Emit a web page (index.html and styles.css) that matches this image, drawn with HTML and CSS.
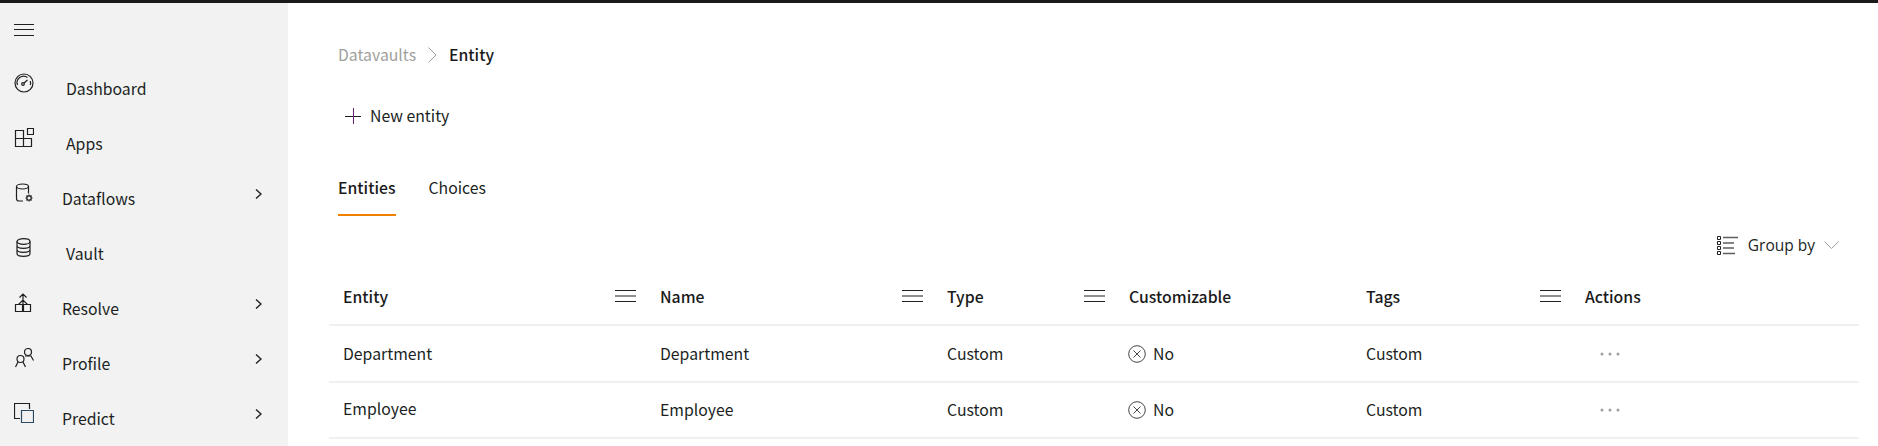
FILE: index.html
```html
<!DOCTYPE html>
<html lang="en">
<head>
  <meta charset="UTF-8" />
  <title>Entity</title>
  <link rel="stylesheet" href="styles.css">
</head>
<body>
  <div class="topbar"></div>
  <div class="app">
    <nav class="sidebar">
      <button class="hamburger" aria-label="Menu">
        <svg width="20" height="12" viewBox="0 0 20 12"><path d="M0 .5h20M0 5.5h20M0 11.5h20" /></svg>
      </button>
      <ul class="nav">
        <li class="nav-item">
          <svg class="nav-icon" width="20" height="20" viewBox="0 0 20 20"><circle cx="10" cy="10" r="9" /><path d="M3.500 12a6.500 6.500 0 0 1 10-7.500M16.200 8a6.500 6.500 0 0 1 .2 4" /><circle cx="9" cy="11" r="1.300" /><path d="M10 10l3.500-3" /></svg>
          <span class="nav-label">Dashboard</span>
        </li>
        <li class="nav-item">
          <svg class="nav-icon" width="20" height="20" viewBox="0 0 20 20"><path d="M1.500 2.500h8v8h8v8h-16zM1.500 10.500h8v8" /><path d="M13.500.5h6v6h-6z" /></svg>
          <span class="nav-label">Apps</span>
        </li>
        <li class="nav-item has-sub">
          <svg class="nav-icon" width="20" height="20" viewBox="0 0 20 20"><ellipse cx="8.500" cy="3.500" rx="6" ry="2.500" /><path d="M2.500 3.500v12a2.500 2.500 0 0 0 2.500 2.500h4M14.500 3.500v7" /><circle cx="15" cy="15" r="2.200" /><path d="M15 11.500v1.300M15 17.200v1.300M11.500 15h1.300M17.200 15h1.300M12.500 12.500l1 1M16.500 16.500l1 1M17.500 12.500l-1 1M13.500 16.500l-1 1" /></svg>
          <span class="nav-label">Dataflows</span>
          <svg class="chevron" width="7" height="10" viewBox="0 0 7 10"><path d="M1 .5L6 5 1 9.500" /></svg>
        </li>
        <li class="nav-item">
          <svg class="nav-icon" width="20" height="20" viewBox="0 0 20 20"><ellipse cx="9.500" cy="3.500" rx="6.500" ry="2.800" /><path d="M3 3.500v12c0 1.600 2.900 2.800 6.500 2.800s6.500-1.200 6.500-2.800v-12M3 7.500c0 1.600 2.900 2.800 6.500 2.800s6.500-1.200 6.500-2.800M3 11.500c0 1.600 2.900 2.800 6.500 2.800s6.500-1.200 6.500-2.800" /></svg>
          <span class="nav-label">Vault</span>
        </li>
        <li class="nav-item has-sub">
          <svg class="nav-icon" width="20" height="20" viewBox="0 0 20 20"><path d="M1.500 11.500h7v7h-7zM9.500 11.500h7v7h-7zM9 11V1M5.500 4.500L9 1l3.500 3.500M4.500 11.500L9 7l4.500 4.500" /></svg>
          <span class="nav-label">Resolve</span>
          <svg class="chevron" width="7" height="10" viewBox="0 0 7 10"><path d="M1 .5L6 5 1 9.500" /></svg>
        </li>
        <li class="nav-item has-sub">
          <svg class="nav-icon" width="20" height="20" viewBox="0 0 20 20"><circle cx="6.500" cy="11" r="3.500" /><path d="M1.500 19l2.500-5M11.500 19L9 14" /><circle cx="14" cy="4" r="3.500" /><path d="M11 8h6l2.500 4.500" /></svg>
          <span class="nav-label">Profile</span>
          <svg class="chevron" width="7" height="10" viewBox="0 0 7 10"><path d="M1 .5L6 5 1 9.500" /></svg>
        </li>
        <li class="nav-item has-sub">
          <svg class="nav-icon" width="20" height="20" viewBox="0 0 20 20"><path d="M6 15.500H.5V.5h15V6" /><path class="blue" d="M7.500 7.500h12v12h-12z" /></svg>
          <span class="nav-label">Predict</span>
          <svg class="chevron" width="7" height="10" viewBox="0 0 7 10"><path d="M1 .5L6 5 1 9.500" /></svg>
        </li>
      </ul>
    </nav>

    <main class="content">
      <div class="breadcrumb">
        <span class="crumb-link">Datavaults</span>
        <svg class="crumb-sep" width="9" height="16" viewBox="0 0 9 16"><path d="M.5.5L8 8 .5 15.500" /></svg>
        <span class="crumb-current">Entity</span>
      </div>

      <button class="new-btn">
        <svg width="16" height="16" viewBox="0 0 16 16"><path d="M0 8.500h16" class="dark" /><path d="M8.500 0v16" class="purple" /></svg>
        New entity
      </button>

      <div class="tabs">
        <span class="tab active">Entities</span>
        <span class="tab">Choices</span>
      </div>

      <div class="toolbar">
        <span class="group-by">
          <svg width="21" height="19" viewBox="0 0 21 19"><path class="dots" d="M.5.5h3v3h-3zM.5 5.500h3v3h-3zM.5 10.500h3v3h-3zM.5 15.500h3v3h-3z" /><path class="lines" d="M6 1.500h15M6 7h11M6 12h11M6 17.500h12" /></svg>
          Group by
          <svg class="caret" width="15" height="9" viewBox="0 0 15 9"><path d="M.5.5l7 7 7-7" /></svg>
        </span>
      </div>

      <table class="grid">
        <colgroup>
          <col class="col-entity"><col class="col-name"><col class="col-type"><col class="col-custom"><col class="col-tags"><col>
        </colgroup>
        <thead>
          <tr>
            <th><div class="th-inner">Entity <svg width="21" height="12" viewBox="0 0 21 12"><path d="M0 .5h21M0 6h21M0 11.500h21" /></svg></div></th>
            <th><div class="th-inner">Name <svg width="21" height="12" viewBox="0 0 21 12"><path d="M0 .5h21M0 6h21M0 11.500h21" /></svg></div></th>
            <th><div class="th-inner">Type <svg width="21" height="12" viewBox="0 0 21 12"><path d="M0 .5h21M0 6h21M0 11.500h21" /></svg></div></th>
            <th>Customizable</th>
            <th><div class="th-inner">Tags <svg width="21" height="12" viewBox="0 0 21 12"><path d="M0 .5h21M0 6h21M0 11.500h21" /></svg></div></th>
            <th>Actions</th>
          </tr>
        </thead>
        <tbody>
          <tr>
            <td>Department</td>
            <td>Department</td>
            <td>Custom</td>
            <td><span class="status"><svg width="18" height="18" viewBox="0 0 18 18"><circle cx="9" cy="9" r="8.300" /><path d="M5.500 5.500l7 7M12.500 5.500l-7 7" /></svg>No</span></td>
            <td>Custom</td>
            <td><svg class="more" width="20" height="4" viewBox="0 0 20 4"><circle cx="2" cy="2" r="1.500" /><circle cx="10" cy="2" r="1.500" /><circle cx="18" cy="2" r="1.500" /></svg></td>
          </tr>
          <tr>
            <td><span class="nudge">Employee</span></td>
            <td>Employee</td>
            <td>Custom</td>
            <td><span class="status"><svg width="18" height="18" viewBox="0 0 18 18"><circle cx="9" cy="9" r="8.300" /><path d="M5.500 5.500l7 7M12.500 5.500l-7 7" /></svg>No</span></td>
            <td>Custom</td>
            <td><svg class="more" width="20" height="4" viewBox="0 0 20 4"><circle cx="2" cy="2" r="1.500" /><circle cx="10" cy="2" r="1.500" /><circle cx="18" cy="2" r="1.500" /></svg></td>
          </tr>
        </tbody>
      </table>
    </main>
  </div>
</body>
</html>
```

FILE: styles.css
```css
* {
  box-sizing: border-box;
}

html, body {
  height: 100%;
}

body {
  margin: 0;
  overflow: hidden;
  background-color: #ffffff;
  color: #201f1e;
  font-family: "Noto Sans CJK SC", "Noto Sans", sans-serif;
  font-size: 15.8px;
  line-height: 24px;
}

svg {
  display: block;
  flex: none;
  fill: none;
  stroke: #201f1e;
  stroke-width: 1;
}

button {
  border: none;
  background: none;
  padding: 0;
  font: inherit;
  color: inherit;
}

.topbar {
  height: 3px;
  background-color: #1a1a1a;
}

.app {
  display: flex;
  height: 443px;
}

/* sidebar */
.sidebar {
  width: 288px;
  flex: none;
  background-color: #f2f2f2;
  padding-left: 14px;
  overflow: hidden;
}

.hamburger {
  display: block;
  margin-top: 21px;
}

.nav {
  list-style: none;
  margin: 25px 0 0;
  padding: 0;
}

.nav-item {
  display: flex;
  align-items: center;
  height: 55px;
  padding-right: 26px;
}

.nav-icon {
  margin-bottom: 12px;
  stroke-width: 1.2;
}

.nav-label {
  margin-left: 32px;
  flex: 1;
}

.has-sub .nav-label {
  margin-left: 28px;
}

.chevron {
  margin-bottom: 10px;
  stroke-width: 1.4;
}

.nav-icon .blue {
  stroke: #2b4a63;
}

/* main */
.content {
  flex: 1;
  min-width: 0;
  padding: 40px 19px 0 41px;
}

.breadcrumb {
  display: flex;
  align-items: center;
  margin-left: 9px;
}

.crumb-link {
  color: #a19f9d;
}

.crumb-sep {
  margin: 0 12px;
  stroke: #a19f9d;
}

.crumb-current {
  font-weight: 500;
  color: #1a1a1a;
}

.new-btn {
  display: flex;
  align-items: center;
  gap: 9px;
  height: 36px;
  margin: 31px 0 0 16px;
}

.new-btn .purple {
  stroke: #6b1f7c;
}

.tabs {
  display: flex;
  gap: 32px;
  margin: 35px 0 0 9px;
}

.tab {
  padding: 7px 1px 14px 0;
  border-bottom: 2px solid transparent;
}

.tab.active {
  font-weight: 500;
  color: #1a1a1a;
  border-bottom-color: #f08000;
}

.toolbar {
  display: flex;
  justify-content: flex-end;
  margin-top: 17px;
  padding-right: 20px;
}

.group-by {
  display: flex;
  align-items: center;
  font-family: "Open Sans", sans-serif;
  font-size: 15.5px;
}

.group-by svg {
  margin-right: 10px;
}

.group-by .lines {
  stroke: #605e5c;
  stroke-width: 1.4;
}

.group-by .caret {
  margin: 0 0 0 9px;
  stroke: #a19f9d;
}

/* table */
.grid {
  width: 100%;
  margin-top: 10px;
  border-collapse: collapse;
  table-layout: fixed;
}

.col-entity {
  width: 317px;
}

.col-name {
  width: 287px;
}

.col-type {
  width: 182px;
}

.col-custom {
  width: 237px;
}

.col-tags {
  width: 219px;
}

th, td {
  padding: 0 10px 0 14px;
  text-align: left;
  border-bottom: 2px solid #f0f0f0;
}

th {
  height: 58px;
  padding-top: 2px;
  font-weight: 500;
  color: #1a1a1a;
}

.th-inner svg {
  margin-top: -2px;
}

td {
  height: 56px;
}

tbody tr:first-child td {
  height: 57px;
}

.th-inner {
  display: flex;
  align-items: center;
  justify-content: space-between;
}

.status {
  display: flex;
  align-items: center;
  gap: 7px;
  margin-left: -1px;
}

.status svg {
  stroke: #484644;
}

.nudge {
  display: block;
  margin-bottom: 3px;
}

.more {
  margin-left: 15px;
  fill: #a19f9d;
  stroke: none;
}
```
